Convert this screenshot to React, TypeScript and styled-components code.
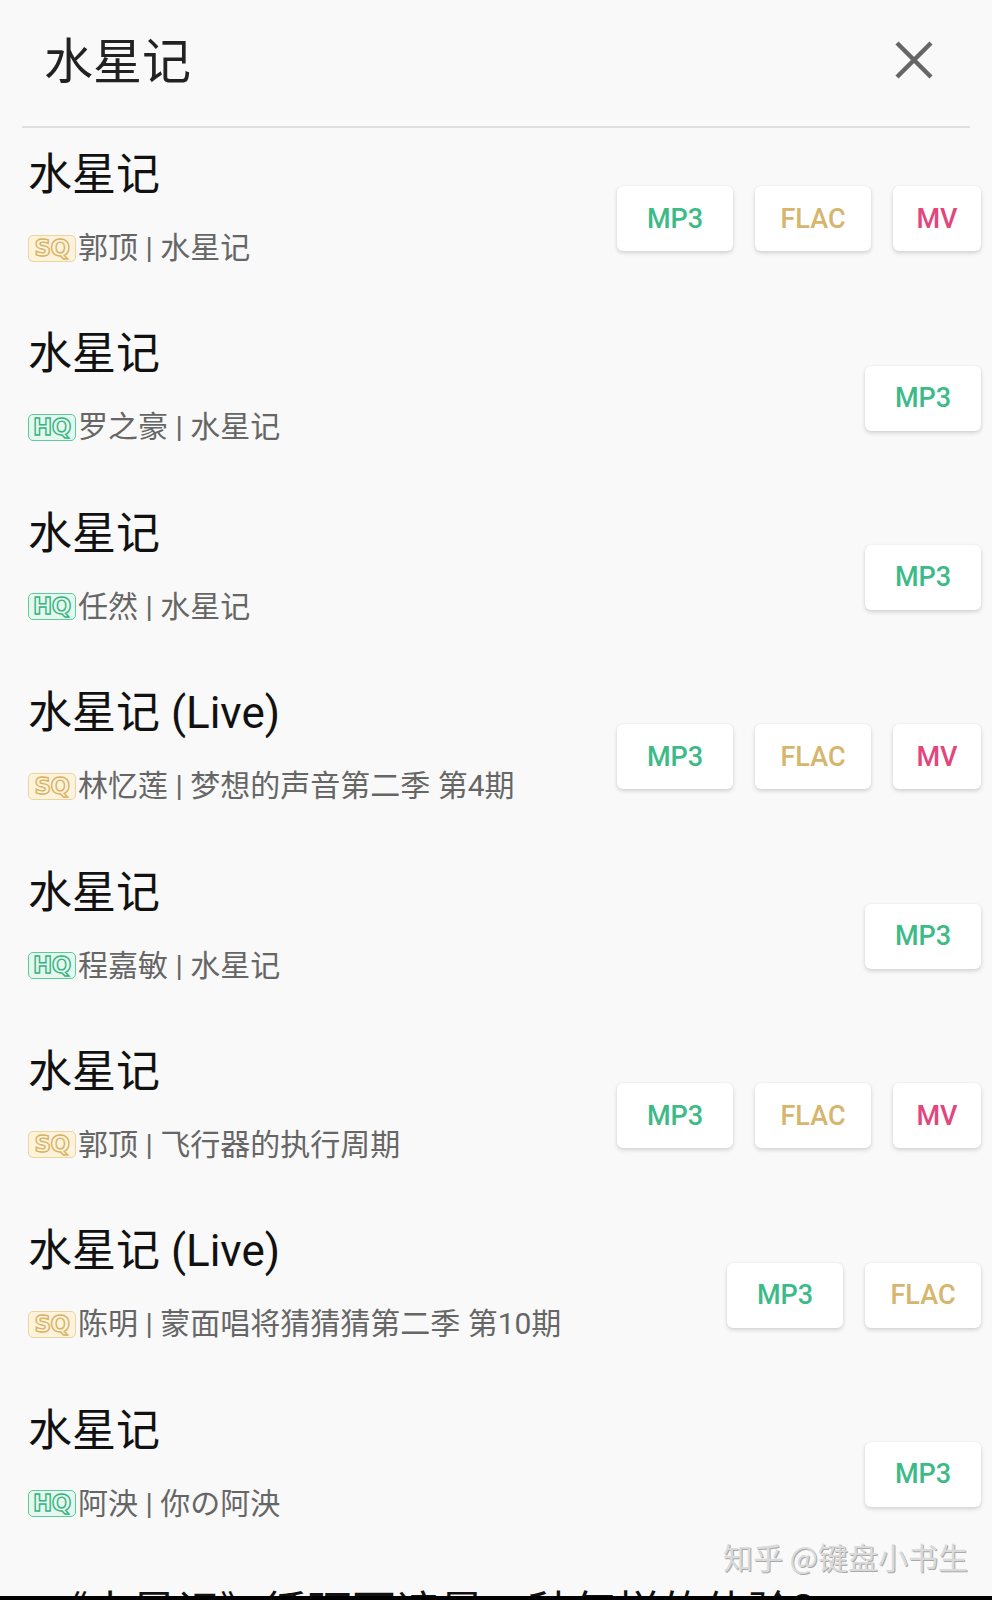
import React from 'react';
import styled, { createGlobalStyle } from 'styled-components';

type Quality = 'SQ' | 'HQ';
type Format = 'MP3' | 'FLAC' | 'MV';

type Song = {
  title: string;
  quality: Quality;
  artist: string;
  album: string;
  formats: Format[];
};

const songs: Song[] = [
  { title: '水星记', quality: 'SQ', artist: '郭顶', album: '水星记', formats: ['MP3', 'FLAC', 'MV'] },
  { title: '水星记', quality: 'HQ', artist: '罗之豪', album: '水星记', formats: ['MP3'] },
  { title: '水星记', quality: 'HQ', artist: '任然', album: '水星记', formats: ['MP3'] },
  { title: '水星记 (Live)', quality: 'SQ', artist: '林忆莲', album: '梦想的声音第二季 第4期', formats: ['MP3', 'FLAC', 'MV'] },
  { title: '水星记', quality: 'HQ', artist: '程嘉敏', album: '水星记', formats: ['MP3'] },
  { title: '水星记', quality: 'SQ', artist: '郭顶', album: '飞行器的执行周期', formats: ['MP3', 'FLAC', 'MV'] },
  { title: '水星记 (Live)', quality: 'SQ', artist: '陈明', album: '蒙面唱将猜猜猜第二季 第10期', formats: ['MP3', 'FLAC'] },
  { title: '水星记', quality: 'HQ', artist: '阿泱', album: '你の阿泱', formats: ['MP3'] },
];

const formatColor: Record<Format, string> = {
  MP3: '#3cba87',
  FLAC: '#d6b56d',
  MV: '#e2467c',
};

const qualityStyle: Record<Quality, { border: string; bg: string; color: string }> = {
  SQ: { border: '#ecd49c', bg: '#fdf3dd', color: '#d9b262' },
  HQ: { border: '#5ccb9c', bg: '#e5f7ee', color: '#36b480' },
};

const GlobalStyle = createGlobalStyle`
  html, body {
    margin: 0;
    padding: 0;
    background: #f9f9f9;
  }
  body {
    font-family: Roboto, "Noto Sans CJK SC", sans-serif;
  }
`;

const Page = styled.div`
  position: relative;
  width: 992px;
  height: 1600px;
  overflow: hidden;
  background: #f9f9f9;
`;

const Header = styled.header`
  display: flex;
  align-items: center;
  justify-content: space-between;
  height: 126px;
  margin: 0 22px;
  border-bottom: 2px solid #e0e0e0;
`;

const HeaderTitle = styled.h1`
  margin: 0 0 0 22px;
  font-family: Roboto, "Noto Sans CJK SC", sans-serif;
  font-size: 49px;
  font-weight: 400;
  color: #222;
  line-height: 60px;
`;

const CloseButton = styled.button`
  display: flex;
  align-items: center;
  justify-content: center;
  width: 56px;
  height: 56px;
  margin: 0 28px 6px 0;
  padding: 0;
  border: none;
  background: transparent;
`;

const List = styled.div`
  display: flex;
  flex-direction: column;
`;

const Row = styled.div`
  display: flex;
  align-items: center;
  justify-content: space-between;
  height: 179.4px;
  padding: 2px 11px 0 28px;
  box-sizing: border-box;
`;

const Info = styled.div`
  display: flex;
  flex-direction: column;
  align-self: flex-start;
  padding-top: 17px;
`;

const Title = styled.div`
  font-size: 44px;
  line-height: 56px;
  color: #111;
  white-space: nowrap;
`;

const Sub = styled.div`
  display: flex;
  align-items: center;
  margin-top: 27px;
  font-size: 30px;
  line-height: 36px;
  color: #666;
  white-space: pre;
`;

const Badge = styled.span<{ $q: Quality }>`
  display: inline-flex;
  align-items: center;
  justify-content: center;
  width: 48px;
  height: 27px;
  margin-right: 2px;
  box-sizing: border-box;
  border: 1.5px solid ${(p) => qualityStyle[p.$q].border};
  border-radius: 5px;
  background: ${(p) => qualityStyle[p.$q].bg};
  color: ${(p) => qualityStyle[p.$q].bg};
  -webkit-text-stroke: 1.4px ${(p) => qualityStyle[p.$q].color};
  font-family: "DejaVu Sans", sans-serif;
  font-size: 23px;
  font-weight: 700;
  letter-spacing: -0.5px;
  line-height: 1;
`;

const Buttons = styled.div`
  display: flex;
  gap: 22px;
`;

const FormatButton = styled.button<{ $f: Format }>`
  width: ${(p) => (p.$f === 'MV' ? '88px' : '116px')};
  height: 65px;
  padding: 0;
  border: none;
  border-radius: 6px;
  background: #fff;
  box-shadow: 0 2px 4px rgba(0, 0, 0, 0.16), 0 0 2px rgba(0, 0, 0, 0.05);
  color: ${(p) => formatColor[p.$f]};
  font-family: Roboto, sans-serif;
  font-size: 27px;
  font-weight: 500;
`;

const Footer = styled.div`
  height: 33px;
  overflow: hidden;
  padding: 25px 0 0 44px;
  box-sizing: border-box;
`;

const Heading = styled.div`
  font-size: 44px;
  line-height: 50px;
  color: #111;
  white-space: nowrap;
`;

const BlackBar = styled.div`
  height: 5px;
  background: #000;
`;

const Watermark = styled.div`
  position: absolute;
  right: 24px;
  bottom: 26px;
  font-family: "Noto Sans CJK SC", sans-serif;
  font-size: 30px;
  line-height: 36px;
  color: #dadada;
  text-shadow: 1px 1px 0 #aaa;
  white-space: nowrap;
`;

const CloseIcon = () => (
  <svg width="40" height="40" viewBox="0 0 40 40">
    <path d="M3 3 L37 37 M37 3 L3 37" stroke="#666" strokeWidth="4.5" fill="none" />
  </svg>
);

const SongRow = ({ song }: { song: Song }) => (
  <Row>
    <Info>
      <Title>{song.title}</Title>
      <Sub>
        <Badge $q={song.quality}>{song.quality}</Badge>
        {`${song.artist} | ${song.album}`}
      </Sub>
    </Info>
    <Buttons>
      {song.formats.map((f) => (
        <FormatButton key={f} $f={f}>
          {f}
        </FormatButton>
      ))}
    </Buttons>
  </Row>
);

const App = () => (
  <Page>
    <GlobalStyle />
    <Header>
      <HeaderTitle>水星记</HeaderTitle>
      <CloseButton>
        <CloseIcon />
      </CloseButton>
    </Header>
    <List>
      {songs.map((s, idx) => (
        <SongRow song={s} key={idx} />
      ))}
    </List>
    <Footer>
      <Heading>《水星记》循环百遍是一种怎样的体验？</Heading>
    </Footer>
    <BlackBar />
    <Watermark>知乎 @键盘小书生</Watermark>
  </Page>
);

export default App;
